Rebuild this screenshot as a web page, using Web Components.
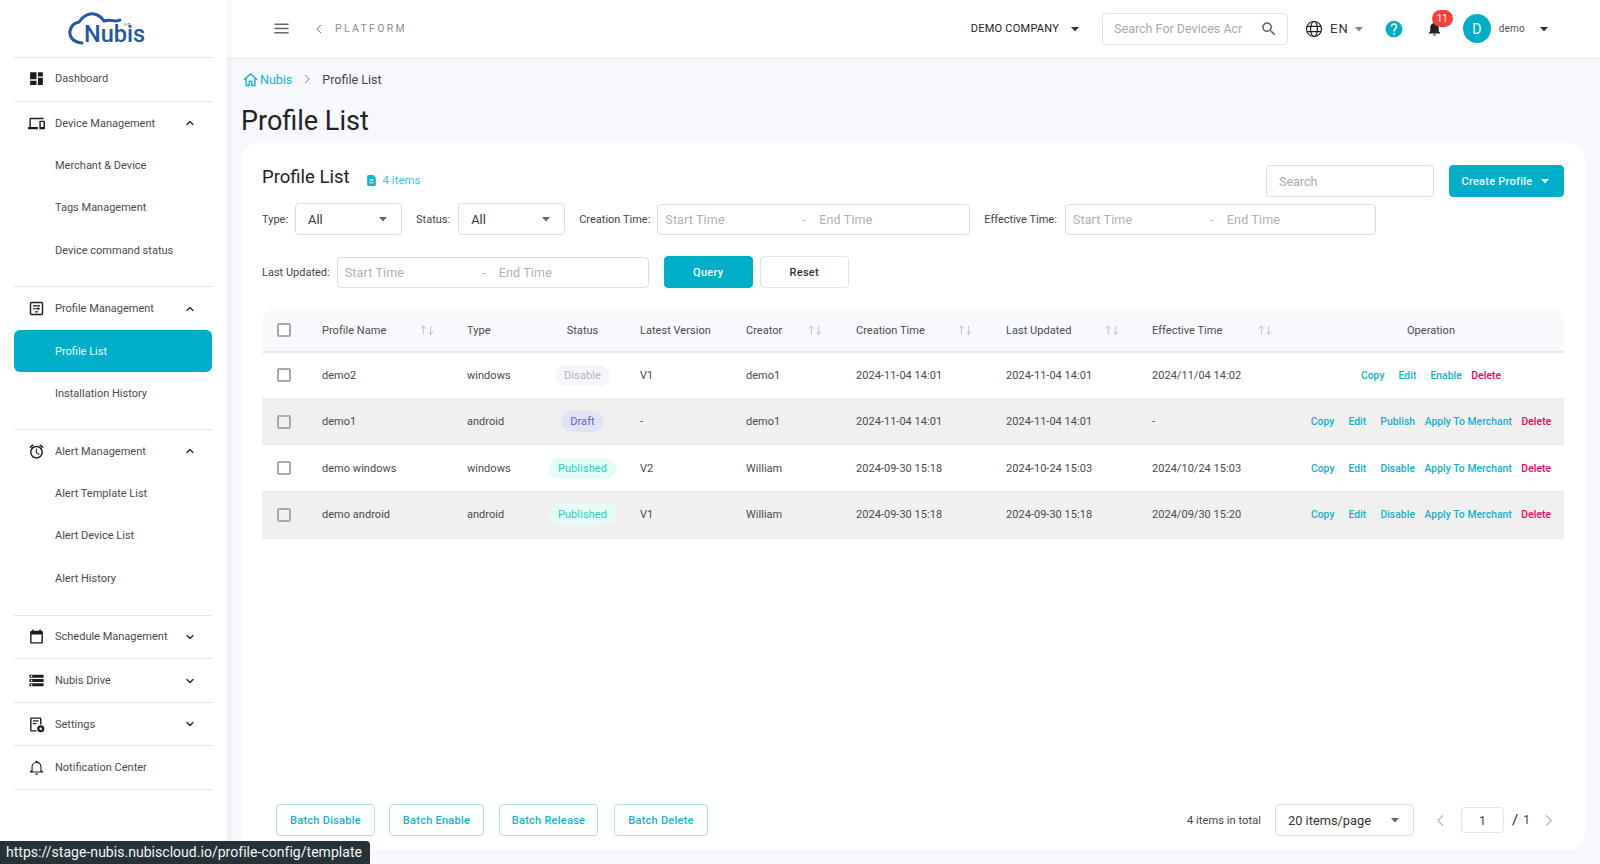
<!DOCTYPE html>
<html lang="en">
<head>
<meta charset="utf-8">
<title>Profile List</title>
<style>
    html, body { margin: 0; height: 100%; overflow: hidden; }
    body { font-family: Roboto, "Liberation Sans", sans-serif; color: #333; background: #f7f8fc; }
</style>
</head>
<body>
<nubis-app></nubis-app>
<script>
const ICONS = {
    dashboard: '<path d="M3 13h9V3H3v10zm0 8h9v-6H3v6zm11 0h7V11h-7v10zm0-18v6h7V3h-7z"/>',
    devices: '<path d="M4 6h18V4H4c-1.1 0-2 .9-2 2v11H0v3h14v-3H4V6zm19 2h-6c-.55 0-1 .45-1 1v10c0 .55.45 1 1 1h6c.55 0 1-.45 1-1V9c0-.55-.45-1-1-1zm-1 9h-4v-7h4v7z"/>',
    profile: '<path d="M5 2.5h14A2.5 2.5 0 0 1 21.5 5v14a2.5 2.5 0 0 1-2.5 2.5H5A2.5 2.5 0 0 1 2.5 19V5A2.5 2.5 0 0 1 5 2.5zm0 2a.5.5 0 0 0-.5.5v14a.5.5 0 0 0 .5.5h14a.5.5 0 0 0 .5-.5V5a.5.5 0 0 0-.5-.5H5zM7 7.5h10v1.6H7V7.5zm0 4h6.5V10l3.5 2.4-3.5 2.4v-1.7H7v-1.6zm3 4.4h4v1.6h-4v-1.6z"/>',
    alarm: '<path d="M22 5.72l-4.6-3.86-1.29 1.53 4.6 3.86L22 5.72zM7.88 3.39L6.6 1.86 2 5.71l1.29 1.53 4.59-3.85zM12.5 8H11v6l4.75 2.85.75-1.23-4-2.37V8zM12 4c-4.97 0-9 4.03-9 9s4.02 9 9 9c4.97 0 9-4.03 9-9s-4.03-9-9-9zm0 16c-3.87 0-7-3.13-7-7s3.13-7 7-7 7 3.13 7 7-3.13 7-7 7z"/>',
    calendar: '<path d="M19 4h-1V2h-2v2H8V2H6v2H5c-1.11 0-2 .9-2 2v14c0 1.1.89 2 2 2h14c1.1 0 2-.9 2-2V6c0-1.1-.9-2-2-2zm0 16H5V9h14v11z"/>',
    storage: '<path d="M2 20h20v-4H2v4zm2-3h2v2H4v-2zM2 4v4h20V4H2zm4 3H4V5h2v2zm-4 7h20v-4H2v4zm2-3h2v2H4v-2z"/>',
    settings: '<path d="M5 2h12a2 2 0 0 1 2 2v8h-2V4H5v16h7v2H5a2 2 0 0 1-2-2V4a2 2 0 0 1 2-2zm2 4h8v1.8H7V6zm0 4h5v1.8H7V10z"/><circle cx="18" cy="18" r="5"/><circle cx="18" cy="18" r="1.8" fill="#fff"/>',
    bellLine: '<path d="M12 22.5c1.1 0 2-.9 2-2h-4c0 1.1.9 2 2 2zm7-6.5v-5c0-3.5-2-6.3-5.5-7V4c0-.83-.67-1.5-1.5-1.5s-1.5.67-1.5 1.5v.5C7 5.2 5 8 5 11v5l-2.5 2v1h19v-1L19 16zm-1.5 1.5h-11V11c0-3 2-5.2 5.5-5.2s5.5 2.2 5.500 5.2v6.500z"/>',
    bell: '<path d="M12 22c1.1 0 2-.9 2-2h-4c0 1.1.89 2 2 2zm6-6v-5c0-3.07-1.64-5.64-4.5-6.32V4c0-.83-.67-1.5-1.5-1.5s-1.5.67-1.5 1.5v.68C7.63 5.36 6 7.92 6 11v5l-2 2v1h16v-1l-2-2z"/>',
    help: '<path d="M12 2C6.48 2 2 6.48 2 12s4.48 10 10 10 10-4.48 10-10S17.52 2 12 2zm1 17h-2v-2h2v2zm2.07-7.75l-.9.92C13.45 12.9 13 13.5 13 15h-2v-.5c0-1.1.45-2.1 1.17-2.83l1.24-1.26c.37-.36.59-.86.59-1.41 0-1.1-.9-2-2-2s-2 .9-2 2H8c0-2.21 1.79-4 4-4s4 1.79 4 4c0 .88-.36 1.68-.93 2.25z"/>',
    search: '<path d="M15.5 14h-.79l-.28-.27C15.41 12.59 16 11.11 16 9.5 16 5.91 13.09 3 9.5 3S3 5.91 3 9.5 5.91 16 9.5 16c1.61 0 3.09-.59 4.23-1.57l.27.28v.79l5 4.99L20.49 19l-4.99-5zm-6 0C7.01 14 5 11.99 5 9.5S7.01 5 9.5 5 14 7.01 14 9.5 11.99 14 9.5 14z"/>',
    globe: '<g fill="none" stroke="currentColor" stroke-width="1.6"><circle cx="12" cy="12" r="10"/><ellipse cx="12" cy="12" rx="4.6" ry="10"/><path d="M2.6 8.5h18.8M2.6 15.5h18.8"/></g>',
    home: '<path fill="none" stroke="currentColor" stroke-width="2.2" stroke-linejoin="round" d="M1.5 12.5 12 3l10.5 9.5M5 10v11.5h5v-7h4v7h5V10"/>',
    doc: '<path d="M6 2h9l5 5v13a2 2 0 0 1-2 2H6a2 2 0 0 1-2-2V4a2 2 0 0 1 2-2z"/><path fill="#fff" d="M8 10h8v2H8zM8 15h8v2H8z"/>',
    menu: '<path d="M2 5h20v2H2zM2 11h20v2H2zM2 17h20v2H2z"/>',
    up: '<path fill="none" stroke="currentColor" stroke-width="2.6" stroke-linecap="round" stroke-linejoin="round" d="M6 15l6-6 6 6"/>',
    down: '<path fill="none" stroke="currentColor" stroke-width="2.6" stroke-linecap="round" stroke-linejoin="round" d="M6 9l6 6 6-6"/>',
    left: '<path fill="none" stroke="currentColor" stroke-width="2.4" stroke-linecap="round" stroke-linejoin="round" d="M16 3l-9 9 9 9"/>',
    right: '<path fill="none" stroke="currentColor" stroke-width="2.4" stroke-linecap="round" stroke-linejoin="round" d="M8 3l9 9-9 9"/>',
    caret: '<path d="M4 8h16l-8 9z"/>',
    sort: '<path fill="none" stroke="currentColor" stroke-width="1.2" d="M6.5 18.5V6M2.5 10l4-4 4 4M17.5 6v12.5M13.5 14.500l4 4 4-4"/>'
};

class NbIcon extends HTMLElement {
    connectedCallback() {
        const size = this.getAttribute('size') || 16;
        const name = this.getAttribute('name');
        this.attachShadow({ mode: 'open' });
        this.shadowRoot.innerHTML = `
        <style>
            :host { display: inline-flex; flex: none; width: ${size}px; height: ${size}px; }
            svg { width: 100%; height: 100%; fill: currentColor; display: block; }
        </style>
        <svg viewBox="0 0 24 24" aria-hidden="true">${ICONS[name]}</svg>`;
    }
}
customElements.define('nb-icon', NbIcon);

class NubisLogo extends HTMLElement {
    connectedCallback() {
        this.attachShadow({ mode: 'open' });
        this.shadowRoot.innerHTML = `
        <style>
            :host { display: block; position: relative; width: 80px; height: 36px; color: #2456a6; }
            svg { position: absolute; left: 0; top: 0; width: 80px; height: 36px; }
            .name { position: absolute; left: 16px; top: 15px; font: 500 23.5px/15px Roboto, sans-serif; }
            .iot { position: absolute; left: 56px; top: 10px; font: 500 4px/5px Roboto, sans-serif; letter-spacing: .4px; }
        </style>
        <svg viewBox="0 0 80 36"><path fill="none" stroke="currentColor" stroke-width="3" stroke-linecap="round" d="M14 31C5 30 1 25 2 19c1-5 4-8 9-9 3-5 9-9 15-8 5 1 8 4 10 7 5-2 9 0 12 0 2 0 3-1 4-1"/></svg>
        <span class="iot">I/O</span>
        <span class="name">Nubis</span>`;
    }
}
customElements.define('nubis-logo', NubisLogo);

class NavSection extends HTMLElement {
    connectedCallback() {
        const icon = this.getAttribute('icon');
        const label = this.getAttribute('label');
        const arrow = this.getAttribute('arrow');
        const head = this.getAttribute('head') || 42;
        const pad = this.getAttribute('pad') || 0;
        const lift = this.getAttribute('lift') || 0;
        this.attachShadow({ mode: 'open' });
        this.shadowRoot.innerHTML = `
        <style>
            :host { display: block; margin: 0 15px 0 14px; border-bottom: 1px solid #e4e5e7; padding-bottom: ${pad}px; }
            .head { display: flex; align-items: center; box-sizing: border-box; height: ${head}px; padding: 0 0 ${lift}px 14px; color: #4b4b4b; }
            nb-icon { color: #1d1d1d; }
            .label { margin-left: 10px; flex: 1; font-size: 11px; white-space: nowrap; }
            .arrow { margin-right: 16px; color: #222; }
        </style>
        <div class="head">
            <nb-icon name="${icon}" size="17"></nb-icon>
            <span class="label">${label}</span>
            ${arrow ? `<nb-icon class="arrow" name="${arrow}" size="12"></nb-icon>` : ''}
        </div>
        <slot></slot>`;
    }
}
customElements.define('nav-section', NavSection);

class NavLink extends HTMLElement {
    connectedCallback() {
        const active = this.hasAttribute('active');
        const height = this.getAttribute('height') || 42.5;
        this.attachShadow({ mode: 'open' });
        this.shadowRoot.innerHTML = `
        <style>
            :host { display: flex; align-items: center; height: ${height}px; padding-left: 41px;
                font-size: 11px; white-space: nowrap;
                color: ${active ? '#eafcff' : '#4b4b4b'}; background: ${active ? '#00aec7' : 'transparent'};
                border-radius: ${active ? '6px' : '0'}; }
        </style>
        <slot></slot>`;
    }
}
customElements.define('nav-link', NavLink);

class NubisSidebar extends HTMLElement {
    connectedCallback() {
        this.attachShadow({ mode: 'open' });
        this.shadowRoot.innerHTML = `
        <style>
            :host { display: block; width: 227px; flex: none; background: #fff; position: relative; z-index: 2;
                box-shadow: 2px 0 6px rgba(40, 50, 80, .06); }
            .logo { height: 45px; padding: 12px 0 0 68px; }
            .rule { height: 1px; margin: 0 15px 0 14px; background: #e4e5e7; }
        </style>
        <div class="logo"><nubis-logo></nubis-logo></div>
        <div class="rule"></div>
        <nav-section icon="dashboard" label="Dashboard" head="43" lift="2"></nav-section>
        <nav-section icon="devices" label="Device Management" arrow="up" head="42" pad="14.5">
            <nav-link>Merchant &amp; Device</nav-link>
            <nav-link>Tags Management</nav-link>
            <nav-link>Device command status</nav-link>
        </nav-section>
        <nav-section icon="profile" label="Profile Management" arrow="up" head="43" pad="15">
            <nav-link active height="42">Profile List</nav-link>
            <nav-link height="42">Installation History</nav-link>
        </nav-section>
        <nav-section icon="alarm" label="Alert Management" arrow="up" head="42" pad="15.5">
            <nav-link>Alert Template List</nav-link>
            <nav-link>Alert Device List</nav-link>
            <nav-link>Alert History</nav-link>
        </nav-section>
        <nav-section icon="calendar" label="Schedule Management" arrow="down" lift="1"></nav-section>
        <nav-section icon="storage" label="Nubis Drive" arrow="down" head="43"></nav-section>
        <nav-section icon="settings" label="Settings" arrow="down"></nav-section>
        <nav-section icon="bellLine" label="Notification Center" head="43"></nav-section>`;
    }
}
customElements.define('nubis-sidebar', NubisSidebar);

class NubisHeader extends HTMLElement {
    connectedCallback() {
        this.attachShadow({ mode: 'open' });
        this.shadowRoot.innerHTML = `
        <style>
            :host { display: flex; align-items: center; height: 57px; flex: none; background: #fff;
                padding-left: 46px; box-shadow: 0 1px 5px rgba(40, 50, 80, .08); position: relative; z-index: 1; }
            .menu { color: #666; }
            .back { color: #777; margin-left: 24px; }
            .platform { margin-left: 11px; font-size: 10.5px; letter-spacing: 2.3px; color: #8d8d8d; }
            .right { margin-left: auto; display: flex; align-items: center; }
            .company { font-size: 11px; letter-spacing: .25px; color: #222; }
            .caret { color: #333; }
            .search { display: flex; align-items: center; width: 186px; height: 32px; box-sizing: border-box;
                padding: 0 11px; border: 1px solid #e2e3e6; border-radius: 4px; }
            .search span { flex: 1; font-size: 12.5px; color: #a9a9a9; white-space: nowrap; }
            .search nb-icon { color: #666; margin-right: -2px; }
            .en { margin-left: 7px; font-size: 13px; letter-spacing: 1px; color: #333; }
            .bell-wrap { position: relative; display: flex; color: #222; }
            .badge { position: absolute; left: 6px; top: -10px; min-width: 21px; height: 17px; border-radius: 9px;
                background: #f2413a; color: #fff; font-size: 10px; line-height: 17px; text-align: center; }
            .avatar { width: 28px; height: 29px; border-radius: 50%; background: #00aec7; color: #fff;
                font-size: 14px; display: flex; align-items: center; justify-content: center; }
            .user { margin-left: 8px; font-size: 10px; color: #555; letter-spacing: .2px; }
        </style>
        <nb-icon class="menu" name="menu" size="17"></nb-icon>
        <nb-icon class="back" name="left" size="10"></nb-icon>
        <span class="platform">PLATFORM</span>
        <div class="right">
            <span class="company">DEMO COMPANY</span>
            <nb-icon class="caret" name="caret" size="12" style="margin-left:10px"></nb-icon>
            <div class="search" style="margin-left:21px"><span>Search For Devices Acr</span><nb-icon name="search" size="18"></nb-icon></div>
            <nb-icon name="globe" size="18" style="margin-left:17px;color:#222"></nb-icon>
            <span class="en">EN</span>
            <nb-icon name="caret" size="12" style="margin-left:4px;color:#888"></nb-icon>
            <nb-icon name="help" size="20" style="margin-left:19px;color:#00aec7"></nb-icon>
            <div class="bell-wrap" style="margin-left:22px"><nb-icon name="bell" size="17"></nb-icon><span class="badge">11</span></div>
            <div class="avatar" style="margin-left:20px">D</div>
            <span class="user">demo</span>
            <nb-icon class="caret" name="caret" size="12" style="margin-left:13px;margin-right:50px"></nb-icon>
        </div>`;
    }
}
customElements.define('nubis-header', NubisHeader);

class PageCrumbs extends HTMLElement {
    connectedCallback() {
        this.attachShadow({ mode: 'open' });
        this.shadowRoot.innerHTML = `
        <style>
            :host { display: block; padding: 13px 0 0 2px; }
            .crumbs { display: flex; align-items: center; height: 18px; font-size: 12.5px; }
            .nubis { color: #16b2cc; margin-left: 2px; }
            .home { color: #16b2cc; }
            .sep { color: #888; margin: 0 10px; }
            .here { color: #444; }
            h1 { margin: 16px 0 0 -2px; font-size: 27px; line-height: 34px; font-weight: 400; color: #222; }
        </style>
        <div class="crumbs">
            <nb-icon class="home" name="home" size="15"></nb-icon>
            <span class="nubis">Nubis</span>
            <nb-icon class="sep" name="right" size="10"></nb-icon>
            <span class="here">Profile List</span>
        </div>
        <h1>Profile List</h1>`;
    }
}
customElements.define('page-crumbs', PageCrumbs);

class PickBox extends HTMLElement {
    connectedCallback() {
        const width = this.getAttribute('width');
        this.attachShadow({ mode: 'open' });
        this.shadowRoot.innerHTML = `
        <style>
            :host { display: inline-flex; align-items: center; box-sizing: border-box; flex: none; width: ${width}px; height: 32px;
                padding: 0 12px 0 12px; border: 1px solid #dcdde0; border-radius: 4px; background: #fff;
                font-size: 12.8px; color: #333; }
            span { flex: 1; white-space: nowrap; }
            nb-icon { color: #666; }
        </style>
        <span><slot></slot></span><nb-icon name="caret" size="12"></nb-icon>`;
    }
}
customElements.define('pick-box', PickBox);

class TimeRange extends HTMLElement {
    connectedCallback() {
        const width = this.getAttribute('width');
        this.attachShadow({ mode: 'open' });
        this.shadowRoot.innerHTML = `
        <style>
            :host { display: inline-flex; align-items: center; box-sizing: border-box; flex: none; width: ${width}px; height: 31px;
                padding-left: 7px; border: 1px solid #dcdde0; border-radius: 4px; background: #fff;
                font-size: 12.5px; letter-spacing: .15px; color: #b0b0b0; white-space: nowrap; }
            .start { width: 137px; }
            .dash { width: 17px; }
        </style>
        <span class="start">Start Time</span><span class="dash">-</span><span>End Time</span>`;
    }
}
customElements.define('time-range', TimeRange);

class FilterLabel extends HTMLElement {
    connectedCallback() {
        this.attachShadow({ mode: 'open' });
        this.shadowRoot.innerHTML = `
        <style>
            :host { display: inline-block; flex: none; font-size: 11px; color: #444; white-space: nowrap; }
        </style>
        <slot></slot>`;
    }
}
customElements.define('filter-label', FilterLabel);

class NbButton extends HTMLElement {
    connectedCallback() {
        const kind = this.getAttribute('kind') || 'plain';
        const width = this.getAttribute('width');
        const looks = {
            solid: 'background:#00aec7;color:#f2fdff;border:1px solid #00aec7;',
            plain: 'background:#fff;color:#333;border:1px solid #e3e4e7;',
            line: 'background:#fff;color:#16b2cc;border:1px solid #a9e3ec;'
        };
        this.attachShadow({ mode: 'open' });
        this.shadowRoot.innerHTML = `
        <style>
            :host { display: inline-flex; align-items: center; justify-content: center; box-sizing: border-box; flex: none;
                width: ${width}px; height: 32px; border-radius: 4px; font-size: 11px; font-weight: 500;
                letter-spacing: .25px; white-space: nowrap; ${looks[kind]} }
        </style>
        <slot></slot>`;
    }
}
customElements.define('nb-button', NbButton);

class FilterBar extends HTMLElement {
    connectedCallback() {
        this.attachShadow({ mode: 'open' });
        this.shadowRoot.innerHTML = `
        <style>
            :host { display: block; }
            .top { display: flex; align-items: center; height: 32px; }
            h2 { margin: 0 0 8px; font-size: 18.5px; line-height: 24px; font-weight: 400; color: #222; }
            .count { display: flex; align-items: center; margin: 0 0 2px 15px; font-size: 11.5px; color: #3cc3d8; }
            .count nb-icon { color: #16b2cc; margin-right: 5px; }
            .search { margin-left: auto; width: 168px; height: 32px; box-sizing: border-box; padding-left: 12px;
                border: 1px solid #dcdde0; border-radius: 4px; display: flex; align-items: center;
                font-size: 12.5px; color: #aaa; }
            .row { display: flex; align-items: center; height: 32px; }
            .one { margin-top: 6px; }
            .two { margin-top: 21px; }
        </style>
        <div class="top">
            <h2>Profile List</h2>
            <span class="count"><nb-icon name="doc" size="13"></nb-icon>4 items</span>
            <div class="search">Search</div>
            <nb-button kind="solid" width="115" style="margin-left:15px">Create Profile<nb-icon name="caret" size="12" style="margin-left:7px"></nb-icon></nb-button>
        </div>
        <div class="row one">
            <filter-label>Type:</filter-label>
            <pick-box width="107" style="margin-left:7px">All</pick-box>
            <filter-label style="margin-left:14px">Status:</filter-label>
            <pick-box width="107" style="margin-left:8px">All</pick-box>
            <filter-label style="margin-left:14px">Creation Time:</filter-label>
            <time-range width="313" style="margin-left:7px"></time-range>
            <filter-label style="margin-left:14px">Effective Time:</filter-label>
            <time-range width="311" style="margin-left:8px"></time-range>
        </div>
        <div class="row two">
            <filter-label>Last Updated:</filter-label>
            <time-range width="312" style="margin-left:7px"></time-range>
            <nb-button kind="solid" width="89" style="margin-left:15px">Query</nb-button>
            <nb-button width="89" style="margin-left:7px">Reset</nb-button>
        </div>`;
    }
}
customElements.define('filter-bar', FilterBar);

class StatusPill extends HTMLElement {
    connectedCallback() {
        const looks = {
            Disable: 'background:#f5f6fa;color:#b2b2b6;',
            Draft: 'background:#e2e4f4;color:#5a5ee0;',
            Published: 'background:#e6fbf8;color:#24cfc0;'
        };
        this.attachShadow({ mode: 'open' });
        this.shadowRoot.innerHTML = `
        <style>
            :host { display: inline-block; height: 21px; line-height: 21px; padding: 0 9px; border-radius: 11px;
                font-size: 11px; letter-spacing: .1px; ${looks[this.textContent.trim()]} }
        </style>
        <slot></slot>`;
    }
}
customElements.define('status-pill', StatusPill);

const COLUMNS = '60px 145px 58px 115px 106px 110px 150px 146px 146px 1fr';

const PROFILES = [
    { name: 'demo2', type: 'windows', status: 'Disable', version: 'V1', creator: 'demo1', created: '2024-11-04 14:01', updated: '2024-11-04 14:01', effective: '2024/11/04 14:02', ops: ['Copy', 'Edit', 'Enable', 'Delete'] },
    { name: 'demo1', type: 'android', status: 'Draft', version: '-', creator: 'demo1', created: '2024-11-04 14:01', updated: '2024-11-04 14:01', effective: '-', ops: ['Copy', 'Edit', 'Publish', 'Apply To Merchant', 'Delete'] },
    { name: 'demo windows', type: 'windows', status: 'Published', version: 'V2', creator: 'William', created: '2024-09-30 15:18', updated: '2024-10-24 15:03', effective: '2024/10/24 15:03', ops: ['Copy', 'Edit', 'Disable', 'Apply To Merchant', 'Delete'] },
    { name: 'demo android', type: 'android', status: 'Published', version: 'V1', creator: 'William', created: '2024-09-30 15:18', updated: '2024-09-30 15:18', effective: '2024/09/30 15:20', ops: ['Copy', 'Edit', 'Disable', 'Apply To Merchant', 'Delete'] }
];

class ProfileTable extends HTMLElement {
    connectedCallback() {
        const opLink = (op) => {
            const cls = op === 'Delete' ? 'op del' : (op === 'Copy' || op === 'Edit') ? 'op wide' : 'op';
            return `<span class="${cls}">${op}</span>`;
        };
        const rows = PROFILES.map((p) => `
            <div class="row">
                <span class="box"></span>
                <span>${p.name}</span>
                <span>${p.type}</span>
                <span class="mid"><status-pill>${p.status}</status-pill></span>
                <span>${p.version}</span>
                <span>${p.creator}</span>
                <span>${p.created}</span>
                <span>${p.updated}</span>
                <span>${p.effective}</span>
                <span class="ops">${p.ops.map(opLink).join('')}</span>
            </div>`).join('');
        this.attachShadow({ mode: 'open' });
        this.shadowRoot.innerHTML = `
        <style>
            :host { display: block; margin-top: 21px; font-size: 11px; letter-spacing: .03px; color: #4a4a4a; }
            .row, .head { display: grid; grid-template-columns: ${COLUMNS}; align-items: center; white-space: nowrap; }
            .head { height: 42px; background: #f8f9fd; border-bottom: 2px solid #e9e9ec; border-radius: 14px 14px 0 0; }
            .row { height: 45.67px; border-bottom: 1px solid #ebebed; }
            .row:nth-child(3) { height: 44.7px; }
            .row:nth-child(even) { background: #f0f0f0; }
            .box { width: 14px; height: 14px; box-sizing: border-box; margin-left: 15px; border: 2px solid #a8a8b2; border-radius: 2px; background: #fff; }
            .row:nth-child(even) .box { background: transparent; }
            .with-sort { position: relative; }
            .sort { position: absolute; top: -2px; margin-left: -1px; color: #b4b4ba; }
            .mid { text-align: center; }
            .ops { display: flex; justify-content: center; color: #10b0c9; letter-spacing: .07px; font-size: 10.3px; font-weight: 500; }
            .op { margin-right: 9.5px; }
            .op.wide { margin-right: 14px; }
            .op.del { margin-right: 0; color: #f5005c; }
        </style>
        <div class="head">
            <span class="box"></span>
            <span class="with-sort">Profile Name<nb-icon class="sort" name="sort" size="16" style="left:98px"></nb-icon></span>
            <span>Type</span>
            <span class="mid">Status</span>
            <span>Latest Version</span>
            <span class="with-sort">Creator<nb-icon class="sort" name="sort" size="16" style="left:62px"></nb-icon></span>
            <span class="with-sort">Creation Time<nb-icon class="sort" name="sort" size="16" style="left:102px"></nb-icon></span>
            <span class="with-sort">Last Updated<nb-icon class="sort" name="sort" size="16" style="left:99px"></nb-icon></span>
            <span class="with-sort">Effective Time<nb-icon class="sort" name="sort" size="16" style="left:106px"></nb-icon></span>
            <span class="mid">Operation</span>
        </div>
        ${rows}`;
    }
}
customElements.define('profile-table', ProfileTable);

class TableFooter extends HTMLElement {
    connectedCallback() {
        this.attachShadow({ mode: 'open' });
        this.shadowRoot.innerHTML = `
        <style>
            :host { display: flex; align-items: center; margin-top: auto; height: 32px; padding: 0 0 14px 14px; }
            .total { margin-left: auto; font-size: 11px; letter-spacing: .1px; color: #444; }
            .chev { color: #b5b5b8; }
            .page { width: 43px; height: 26px; box-sizing: border-box; margin-left: 14px; border: 1px solid #e2e3e6; border-radius: 4px;
                display: flex; align-items: center; justify-content: center; font-size: 12.5px; color: #444; }
            .slash { margin-left: 8px; font-size: 15px; color: #222; }
            .of { margin-left: 5px; font-size: 12px; color: #444; }
        </style>
        <nb-button kind="line" width="99">Batch Disable</nb-button>
        <nb-button kind="line" width="95" style="margin-left:14px">Batch Enable</nb-button>
        <nb-button kind="line" width="99" style="margin-left:15px">Batch Release</nb-button>
        <nb-button kind="line" width="94" style="margin-left:16px">Batch Delete</nb-button>
        <span class="total">4 items in total</span>
        <pick-box width="139" style="margin-left:14px">20 items/page</pick-box>
        <nb-icon class="chev" name="left" size="13" style="margin-left:20px"></nb-icon>
        <div class="page">1</div>
        <span class="slash">/</span>
        <span class="of">1</span>
        <nb-icon class="chev" name="right" size="13" style="margin-left:12px;margin-right:9px"></nb-icon>`;
    }
}
customElements.define('table-footer', TableFooter);

class ProfileCard extends HTMLElement {
    connectedCallback() {
        this.attachShadow({ mode: 'open' });
        this.shadowRoot.innerHTML = `
        <style>
            :host { display: flex; flex-direction: column; height: 707px; box-sizing: border-box; margin-top: 5px;
                padding: 22px 21px 0; background: #fff; border-radius: 16px; }
        </style>
        <filter-bar></filter-bar>
        <profile-table></profile-table>
        <table-footer></table-footer>`;
    }
}
customElements.define('profile-card', ProfileCard);

class LinkHint extends HTMLElement {
    connectedCallback() {
        this.attachShadow({ mode: 'open' });
        this.shadowRoot.innerHTML = `
        <style>
            :host { position: fixed; left: 0; bottom: 0; z-index: 5; height: 23px; line-height: 23px; padding: 0 8px 0 6px;
                background: #263238; color: #f4f6f7; font-size: 14px; letter-spacing: .03px; border-radius: 0 4px 0 0; white-space: nowrap; }
        </style>
        <slot></slot>`;
    }
}
customElements.define('link-hint', LinkHint);

class NubisApp extends HTMLElement {
    connectedCallback() {
        this.attachShadow({ mode: 'open' });
        this.shadowRoot.innerHTML = `
        <style>
            :host { display: flex; height: 864px; overflow: hidden; }
            .main { flex: 1; min-width: 0; display: flex; flex-direction: column; }
            .content { padding: 0 15px 0 14px; }
        </style>
        <nubis-sidebar></nubis-sidebar>
        <div class="main">
            <nubis-header></nubis-header>
            <div class="content">
                <page-crumbs></page-crumbs>
                <profile-card></profile-card>
            </div>
        </div>
        <link-hint>https://stage-nubis.nubiscloud.io/profile-config/template</link-hint>`;
    }
}
customElements.define('nubis-app', NubisApp);
</script>
</body>
</html>
